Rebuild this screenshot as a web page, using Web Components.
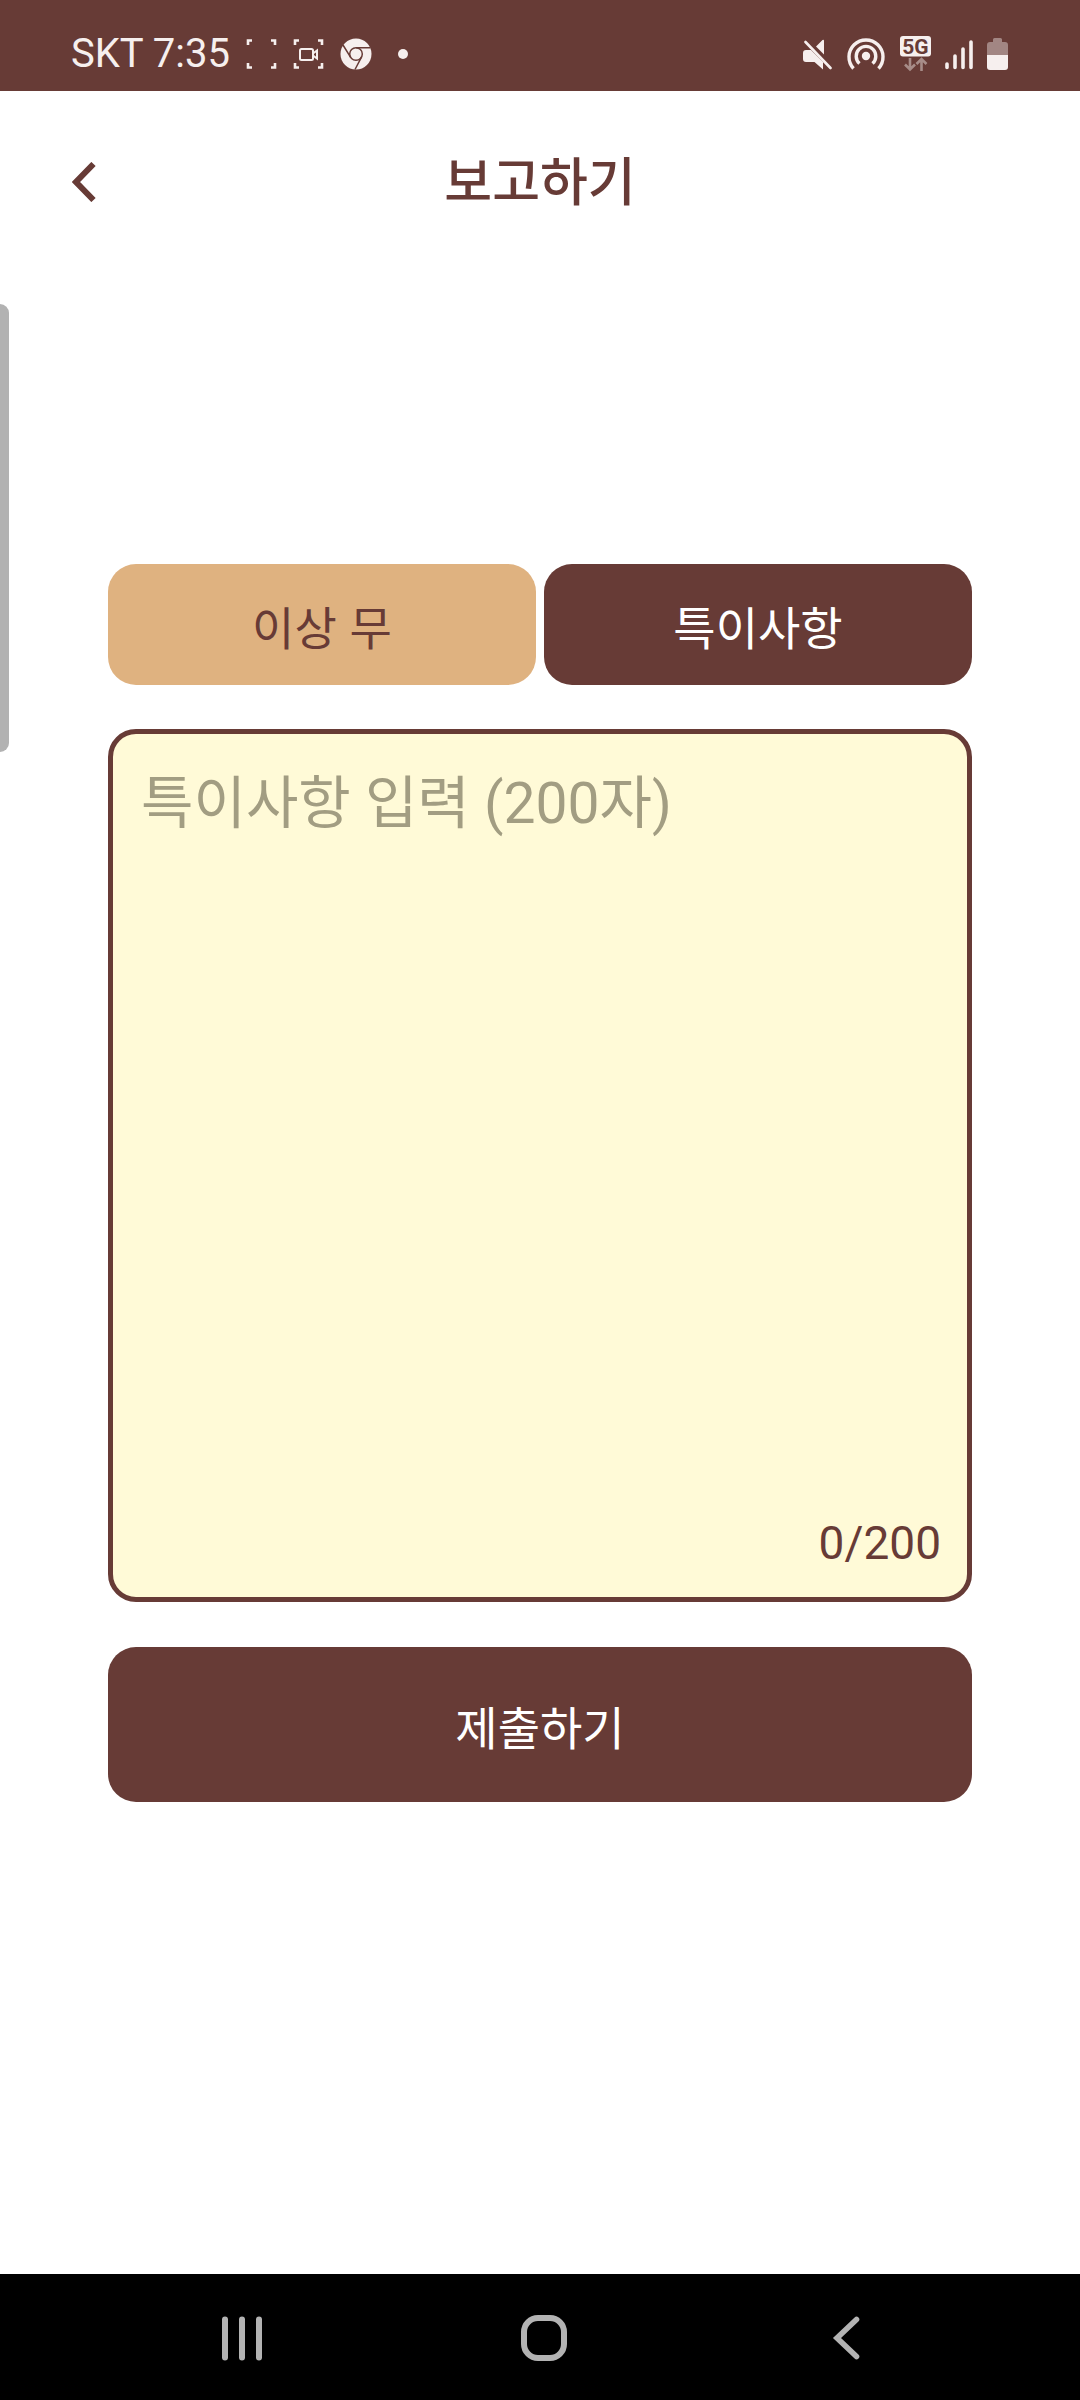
<!DOCTYPE html>
<html lang="ko">
<head>
<meta charset="utf-8">
<meta name="viewport" content="width=device-width, initial-scale=1">
<title>보고하기</title>
<style>
  :root {
    --brown: #673b36;
    --tan: #dfb280;
    --cream: #fffad7;
    --hint: #a29d82;
    --status-ink: #f6efee;
  }
  body {
    margin: 0;
    background: #fff;
    color: var(--brown);
    font-family: Roboto, "Noto Sans CJK KR", sans-serif;
  }
</style>
</head>
<body>
<report-app></report-app>

<script>
const define = (name, html, setup) => {
  const template = document.createElement('template');
  template.innerHTML = html;
  customElements.define(name, class extends HTMLElement {
    connectedCallback() {
      if (this.shadowRoot) return;
      this.attachShadow({ mode: 'open' }).append(template.content.cloneNode(true));
      if (setup) setup(this, this.shadowRoot);
    }
  });
};

define('status-bar', `
  <style>
    :host { display: flex; justify-content: space-between; align-items: center; height: 91px; padding: 16px 71px 0; box-sizing: border-box; background: var(--brown); color: var(--status-ink); font-size: 40px; line-height: 48px; }
    div { display: flex; align-items: center; }
    .left { gap: 16px; }
    .right { gap: 14px; }
    svg { display: block; fill: none; stroke: currentColor; }
    text { font: 700 21px Roboto, sans-serif; fill: var(--brown); stroke: none; }
  </style>
  <div class="left">
    <span>SKT 7:35</span>
    <svg width="31" height="32" viewBox="0 0 31 32" stroke-width="2.6"><path d="M2 7V2.500h4M25 2.500h4V7M29 25v4.500h-4M6 29.500H2V25"/></svg>
    <svg width="31" height="32" viewBox="0 0 31 32" stroke-width="2.600"><path d="M2 7V2.500h4M25 2.500h4V7M29 25v4.500h-4M6 29.500H2V25"/><rect x="7" y="11" width="13" height="11" rx="1.500" stroke-width="2"/><path stroke-width="2" d="M20 15.500l4-3v8l-4-3"/></svg>
    <svg width="32" height="32" viewBox="0 0 32 32"><circle cx="16" cy="16" r="15.500" fill="currentColor" stroke="none"/><g stroke="var(--brown)" stroke-width="1.500"><circle cx="16" cy="16" r="6.300"/><path d="M16 9.700h14.500M10.500 19.200L3 7M21.500 19.200L15 31.500"/></g></svg>
    <svg width="32" height="32" viewBox="0 0 32 32"><circle cx="15" cy="16" r="5" fill="currentColor" stroke="none"/></svg>
  </div>
  <div class="right">
    <svg width="30" height="34" viewBox="0 0 30 34"><path fill="currentColor" stroke="none" d="M4 13h5l12 12v7.500L12.500 25H4q-3 0-3-3v-6q0-3 3-3zM14 9.500L20.500 3q1.500-.8 1.500 1v13.500z"/><path stroke-width="2.600" stroke-linecap="round" d="M3.500 5l25 26"/></svg>
    <svg width="40" height="34" viewBox="0 0 40 34" stroke-width="3.400"><circle cx="20" cy="19" r="4.200" fill="currentColor" stroke="none"/><path d="M13.500 26.500a9.800 9.800 0 1 1 13 0M7.500 31.500a17 17 0 1 1 25 0"/></svg>
    <svg width="31" height="36" viewBox="0 0 31 36"><rect x="0" y="0" width="31" height="20.500" rx="3" fill="currentColor" stroke="none"/><text x="15.500" y="18" text-anchor="middle">5G</text><path opacity=".45" stroke-width="2.600" d="M10 22v11M5 28.500l5 5 5-5M21.500 35V23M16.500 28l5-5 5 5"/></svg>
    <svg width="28" height="34" viewBox="0 0 28 34" stroke-width="3.600" stroke-linecap="round"><path d="M2 27v3.500M10 19v11.500M18 12v18.500M26 5v25.500"/></svg>
    <svg width="22" height="34" viewBox="0 0 22 34"><g fill="currentColor" stroke="none"><path opacity=".42" d="M0 18V8q0-3 3-3h3V2.500Q6 1 7.500 1h6Q15 1 15 2.500V5h3q3 0 3 3v10z"/><path d="M0 18h21v12q0 3-3 3H3q-3 0-3-3z"/></g></svg>
  </div>`);

define('page-header', `
  <style>
    :host { display: grid; grid-template-columns: 1fr auto 1fr; align-items: center; height: 182px; padding: 0 60px; }
    button { justify-self: start; padding: 12px; border: 0; background: none; color: inherit; cursor: pointer; }
    svg { display: block; fill: none; stroke: currentColor; stroke-width: 6; }
    h1 { margin: 0; padding-bottom: 6px; font: 500 52px/72px "Noto Sans CJK KR", sans-serif; }
  </style>
  <button type="button" aria-label="뒤로">
    <svg width="24" height="40" viewBox="0 0 24 40"><path d="M21.500 2L4 20l17.500 18"/></svg>
  </button>
  <h1><slot></slot></h1>`);

define('app-button', `
  <style>
    :host { display: block; }
    button { display: block; width: 100%; height: var(--button-height, 121px); padding: 0; border: 0; border-radius: 28px; background: var(--brown); color: #fff; font: 400 46px/64px "Noto Sans CJK KR", sans-serif; cursor: pointer; }
    :host([tone="tan"]) button { background: var(--tan); color: var(--brown); }
  </style>
  <button type="button"><slot></slot></button>`);

define('note-field', `
  <style>
    :host { display: block; }
    .box { display: flex; flex-direction: column; height: 873px; box-sizing: border-box; padding: 28px 26px 26px 28px; border: 5px solid var(--brown); border-radius: 28px; background: var(--cream); }
    textarea { flex: 1; min-height: 0; padding: 0; border: 0; outline: 0; resize: none; overflow: hidden; background: none; color: var(--brown); font: 400 57px/84px Roboto, "Noto Sans CJK KR", sans-serif; }
    textarea::placeholder { color: var(--hint); opacity: 1; }
    output { align-self: flex-end; font-size: 46px; line-height: 56px; }
  </style>
  <div class="box">
    <textarea id="note" maxlength="200" aria-label="특이사항" placeholder="특이사항 입력 (200자)"></textarea>
    <output for="note">0/200</output>
  </div>`, (host, root) => {
  const area = root.querySelector('textarea');
  area.addEventListener('input', () => {
    root.querySelector('output').textContent = area.value.length + '/200';
  });
});

define('nav-bar', `
  <style>
    :host { display: grid; grid-template-columns: repeat(3, 1fr); height: 126px; padding: 0 82px 0 91px; box-sizing: border-box; background: #000; color: #b3b3b3; }
    button { display: grid; place-items: center; padding: 2px 0 0; border: 0; background: none; color: inherit; cursor: pointer; }
    svg { display: block; fill: none; stroke: currentColor; stroke-width: 6; stroke-linecap: round; }
  </style>
  <button type="button" aria-label="최근 앱"><svg width="48" height="48" viewBox="0 0 48 48"><path d="M7 5.500v38M24 5.500v38M41 5.500v38"/></svg></button>
  <button type="button" aria-label="홈"><svg width="48" height="48" viewBox="0 0 48 48"><rect x="4" y="4" width="40" height="40" rx="14"/></svg></button>
  <button type="button" aria-label="뒤로"><svg width="48" height="48" viewBox="0 0 48 48"><path d="M33.500 5.500L14 24l19.500 18.500" stroke-width="5.600"/></svg></button>`);

define('report-app', `
  <style>
    :host { display: flex; flex-direction: column; min-height: 100vh; position: relative; }
    main { flex: 1; display: flex; flex-direction: column; padding: 291px 10% 60px; }
    .tabs { display: grid; grid-template-columns: 1fr 1fr; gap: 8px; }
    note-field { margin: 44px 0 45px; }
    .submit { --button-height: 155px; }
    .edge { position: absolute; left: 0; top: 304px; width: 9px; height: 448px; border-radius: 0 9px 9px 0; background: #b2b2b2; }
  </style>
  <status-bar></status-bar>
  <page-header>보고하기</page-header>
  <main>
    <div class="tabs">
      <app-button tone="tan">이상 무</app-button>
      <app-button>특이사항</app-button>
    </div>
    <note-field></note-field>
    <app-button class="submit">제출하기</app-button>
  </main>
  <nav-bar></nav-bar>
  <div class="edge"></div>`);
</script>
</body>
</html>
